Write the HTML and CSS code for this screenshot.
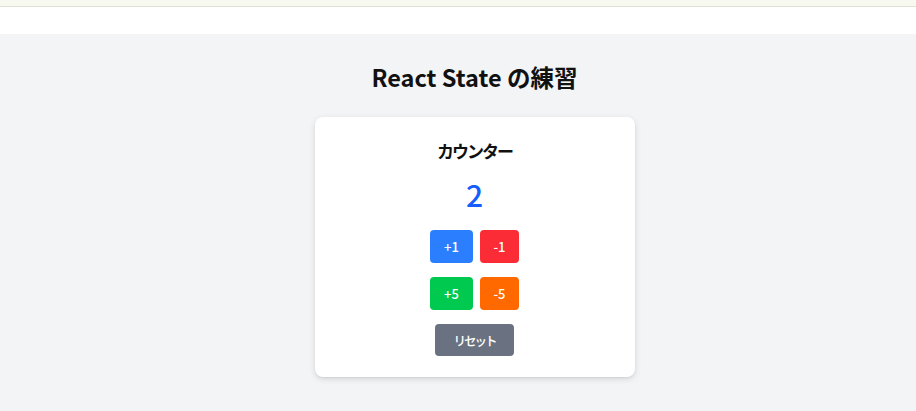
FILE: index.html
```html
<!DOCTYPE html>
<html lang="ja">
<head>
<meta charset="utf-8">
<link rel="stylesheet" href="styles.css">
</head>
<body>
<div class="topbar"></div>
<div class="whiteband"></div>
<main class="page">
  <h1 class="title">React State の練習</h1>
  <section class="card">
    <h2 class="card-title">カウンター</h2>
    <div class="count">2</div>
    <div class="row">
      <button class="btn blue">+1</button>
      <button class="btn red">-1</button>
    </div>
    <div class="row">
      <button class="btn green">+5</button>
      <button class="btn orange">-5</button>
    </div>
    <div class="row">
      <button class="btn gray reset">リセット</button>
    </div>
  </section>
</main>
</body>
</html>
```

FILE: styles.css
```css
* { box-sizing: border-box; }
html, body { margin: 0; padding: 0; }
body {
  width: 916px;
  height: 411px;
  overflow: hidden;
  background: #f3f4f6;
  font-family: "Noto Sans CJK JP", "Noto Sans", sans-serif;
  color: #111;
}
.topbar {
  height: 7px;
  background: #f7f9f0;
  border-bottom: 1px solid #e0e0d8;
}
.whiteband {
  height: 27px;
  background: #fff;
}
.page {
  padding-left: 33px;
  display: flex;
  flex-direction: column;
  align-items: center;
}
.title {
  margin: 26px 0 0;
  font-size: 23.5px;
  line-height: 34px;
  font-weight: 700;
}
.card {
  margin-top: 23px;
  width: 320px;
  background: #fff;
  border-radius: 8px;
  box-shadow: 0 2px 6px rgba(0,0,0,0.12), 0 1px 2px rgba(0,0,0,0.06);
  padding: 20px 20px 21px;
  display: flex;
  flex-direction: column;
  align-items: center;
}
.card-title {
  margin: 0;
  font-size: 17px;
  line-height: 28px;
  font-weight: 700;
  letter-spacing: -2px;
}
.count {
  margin-top: 11px;
  font-size: 30px;
  line-height: 36px;
  font-weight: 500;
  color: #155dfc;
}
.row {
  display: flex;
  gap: 7px;
}
.count + .row { margin-top: 18px; }
.row + .row { margin-top: 14px; }
.btn {
  border: none;
  border-radius: 4px;
  color: #fff;
  font-family: inherit;
  font-size: 13px;
  font-weight: 500;
  height: 33px;
  padding: 0;
  cursor: pointer;
}
.blue { background: #2b7fff; width: 43px; }
.red { background: #fb2c36; width: 39px; }
.green { background: #00c950; width: 43px; }
.orange { background: #ff6900; width: 39px; }
.gray { background: #6a7282; }
.reset { height: 32px; width: 79px; font-size: 12.5px; letter-spacing: -2px; }
```
